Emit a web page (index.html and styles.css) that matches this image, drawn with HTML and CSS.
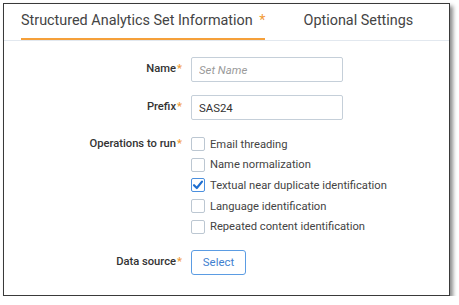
FILE: index.html
```html
<!DOCTYPE html>
<html lang="en">
<head>
  <meta charset="UTF-8" />
  <title>Structured Analytics Set</title>
  <link rel="stylesheet" href="styles.css">
</head>
<body>

  <div class="frame">
    <div class="tabs">
      <div class="tab active">Structured Analytics Set Information <span class="req tab-req">*</span></div>
      <div class="tab">Optional Settings</div>
    </div>

    <form class="form">
      <div class="row">
        <label class="label" for="set-name">Name<span class="req">*</span></label>
        <input type="text" id="set-name" class="field" placeholder="Set Name" />
      </div>

      <div class="row row-prefix">
        <label class="label" for="set-prefix">Prefix<span class="req">*</span></label>
        <input type="text" id="set-prefix" class="field" value="SAS24" />
      </div>

      <div class="row row-ops">
        <div class="label">Operations to run<span class="req">*</span></div>
        <div class="options">
          <label class="option"><span class="box"></span>Email threading</label>
          <label class="option"><span class="box"></span>Name normalization</label>
          <label class="option"><span class="box checked">
            <svg viewBox="0 0 14 14" width="14" height="14"><path d="M3 7.2 L5.8 10 L11 3.6" fill="none" stroke="#1f6fd0" stroke-width="2.2" stroke-linecap="round" stroke-linejoin="round"/></svg>
          </span>Textual near duplicate identification</label>
          <label class="option"><span class="box"></span>Language identification</label>
          <label class="option"><span class="box"></span>Repeated content identification</label>
        </div>
      </div>

      <div class="row row-source">
        <div class="label">Data source<span class="req">*</span></div>
        <div><button type="button" class="select-btn">Select</button></div>
      </div>
    </form>
  </div>

</body>
</html>
```

FILE: styles.css
```css
body {
  margin: 0;
  padding: 0;
  background: #fff;
  font-family: Roboto, "Liberation Sans", sans-serif;
  color: #444;
}

.frame {
  margin: 3px 0 0 3px;
  width: 445px;
  height: 291px;
  border: 1px solid #3a3a3a;
  background: #fff;
  box-shadow: 3px 3px 4px rgba(0, 0, 0, 0.45);
}

.tabs {
  display: flex;
  height: 36px;
  border-bottom: 1px solid #e2e8ef;
  padding-left: 17px;
}

.tab {
  flex-shrink: 0;
  white-space: nowrap;
  font-size: 14.4px;
  line-height: 34px;
  color: #444;
  margin-right: 38px;
}

.tab.active {
  border-bottom: 2px solid #f5a03a;
  height: 34px;
}

.req {
  color: #f29b38;
}

.tab-req {
  margin-left: 3px;
}

.form {
  padding-top: 16px;
}

.row {
  display: grid;
  grid-template-columns: 178px 1fr;
  column-gap: 9px;
  align-items: center;
}

.row-prefix {
  margin-top: 13px;
}

.row-ops {
  margin-top: 14px;
  align-items: start;
}

.row-source {
  margin-top: 13px;
}

.label {
  text-align: right;
  font-size: 11.2px;
  font-weight: 500;
  color: #333;
  line-height: 20.5px;
}

.label .req {
  margin-left: 1px;
}

.field {
  box-sizing: border-box;
  width: 152px;
  height: 25px;
  border: 1px solid #c5cfd9;
  border-radius: 2px;
  padding: 0 7px;
  font-family: Roboto, "Liberation Sans", sans-serif;
  font-size: 11.4px;
  color: #333;
}

.field::placeholder {
  color: #9a9a9a;
  font-style: italic;
}

.options {
  display: flex;
  flex-direction: column;
}

.option {
  display: flex;
  align-items: center;
  height: 20.6px;
  font-size: 11.2px;
  color: #444;
}

.box {
  box-sizing: border-box;
  width: 14px;
  height: 14px;
  border: 1px solid #bcc7d2;
  border-radius: 2px;
  margin-right: 5px;
  display: flex;
}

.box.checked {
  border-color: #4a8fde;
}

.box svg {
  margin: -1px;
}

.select-btn {
  box-sizing: border-box;
  width: 55px;
  height: 25px;
  border: 1px solid #5b9ce3;
  border-radius: 3px;
  background: #fff;
  color: #3f7fd0;
  font-family: Roboto, "Liberation Sans", sans-serif;
  font-size: 11.4px;
  padding: 0;
}
```
